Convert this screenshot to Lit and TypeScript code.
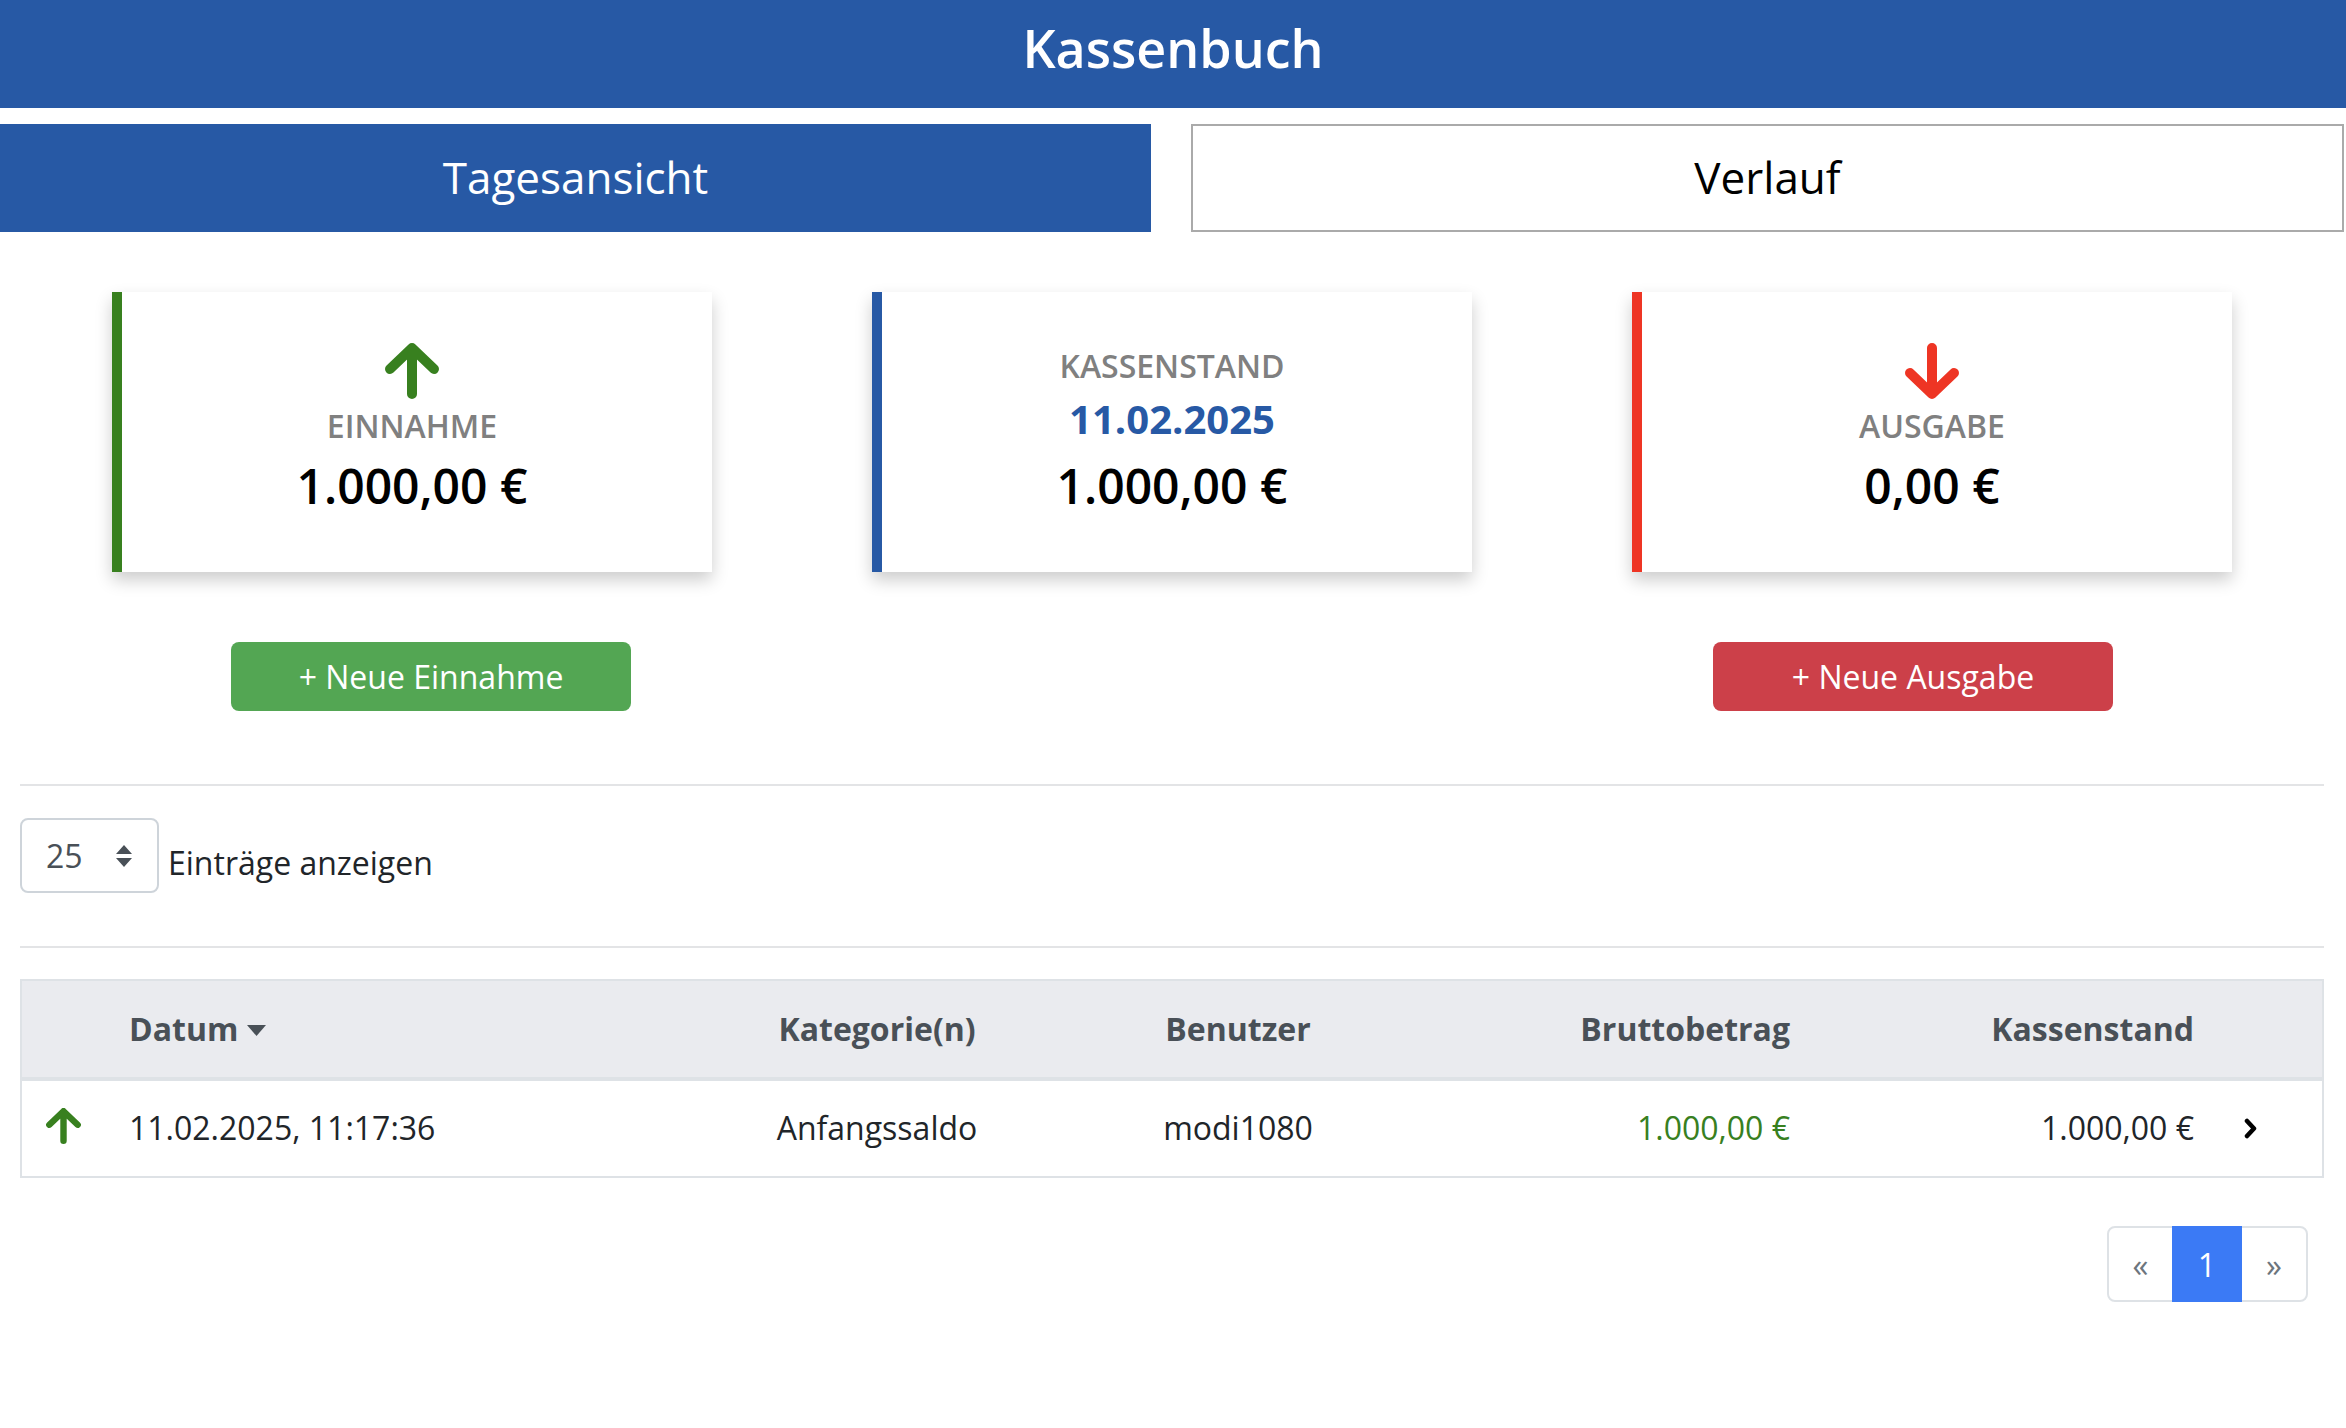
import { LitElement, html, css, svg } from "lit";
import { customElement } from "lit/decorators.js";

const upArrow = (cls: string) => html`<svg class=${cls} viewBox="0 0 54 56" aria-hidden="true"><g fill="none" stroke="currentColor" stroke-width="10" stroke-linecap="round" stroke-linejoin="round">${svg`<path d="M5 26 27 5l22 21M27 6v45"/>`}</g></svg>`;
const downArrow = (cls: string) => html`<svg class=${cls} viewBox="0 0 54 56" aria-hidden="true"><g fill="none" stroke="currentColor" stroke-width="10" stroke-linecap="round" stroke-linejoin="round">${svg`<path d="M5 30 27 51l22-21M27 50V5"/>`}</g></svg>`;

@customElement("app-root")
export class AppRoot extends LitElement {
  static styles = css`
    :host {
      display: block;
      width: 2346px;
      height: 1428px;
      background: #fff;
      overflow: hidden;
      font-family: "Open Sans", "Noto Sans", sans-serif;
      color: #212529;
      font-size: 32px;
    }
    * { box-sizing: border-box; }
    .title {
      height: 108px;
      background: #2759a5;
      color: #fff;
      font-size: 52px;
      font-weight: 600;
      display: flex;
      align-items: center;
      justify-content: center;
      padding-bottom: 13px;
    }
    .tabs {
      margin-top: 16px;
      display: grid;
      grid-template-columns: 1151px 1153px;
      column-gap: 40px;
      height: 108px;
    }
    .tab {
      display: flex;
      align-items: center;
      justify-content: center;
      font-size: 44px;
      color: #000;
      padding-bottom: 2px;
    }
    .tab.active { background: #2759a5; color: #fff; }
    .tab.idle { border: 2px solid #aaaaaa; }
    .cards {
      margin-top: 60px;
      padding: 0 32px;
      display: grid;
      grid-template-columns: repeat(3, 760px);
    }
    .card {
      justify-self: center;
      width: 600px;
      height: 280px;
      background: #fff;
      border-left: 10px solid;
      box-shadow: 0 8px 16px rgba(0, 0, 0, 0.2);
      display: flex;
      flex-direction: column;
      align-items: center;
      justify-content: flex-end;
      padding: 0 10px 53px 0;
    }
    .card.in { border-color: #38801f; }
    .card.bal { border-color: #2759a5; }
    .card.out { border-color: #ee3524; }
    .card-icon { width: 54px; height: 56px; margin-bottom: 5px; }
    .in .card-icon { color: #38801f; }
    .out .card-icon { color: #ee3524; }
    .label { font-size: 32px; font-weight: 600; color: #808080; line-height: 44px; }
    .date { font-size: 40px; font-weight: 700; color: #2759a5; line-height: 56px; margin: 3px 0 1px; }
    .amount { font-size: 48px; font-weight: 600; color: #000; line-height: 66px; margin-top: 5px; }
    .actions {
      margin-top: 70px;
      display: grid;
      grid-template-columns: 400px 400px;
      justify-content: space-between;
      padding: 0 233px 0 231px;
    }
    .btn {
      height: 69px;
      border-radius: 8px;
      color: #fff;
      display: flex;
      align-items: center;
      justify-content: center;
      font-size: 32px;
    }
    .btn.add { background: #53a653; }
    .btn.sub { background: #cc4049; }
    .section { margin: 0 22px 0 20px; }
    .rule { height: 2px; background: #e3e4e6; }
    .r1 { margin-top: 73px; }
    .length { display: flex; align-items: flex-start; gap: 9px; height: 160px; padding-top: 32px; }
    .select {
      width: 139px;
      height: 75px;
      border: 2px solid #ced4da;
      border-radius: 8px;
      display: flex;
      align-items: center;
      justify-content: space-between;
      padding: 0 24px;
      color: #495057;
      font-size: 32px;
    }
    .stepper { width: 18px; height: 22px; }
    .length-label { line-height: 56px; margin-top: 17px; }
    .table { margin-top: 31px; border: 2px solid #dee2e6; }
    .row {
      display: grid;
      grid-template-columns: 107px 571px 354px 368px 368px 404px 130px;
      align-items: center;
    }
    .body > span { margin-top: -2px; }
    .head > span { margin-top: -1px; }
    .head {
      height: 100px;
      background: #eaebef;
      border-bottom: 4px solid #dee2e6;
      font-weight: 700;
      color: #495057;
    }
    .body { height: 95px; }
    .center { text-align: center; }
    .right { text-align: right; }
    .datum { display: flex; align-items: center; gap: 9px; }
    .caret { width: 19px; height: 11px; margin-top: 3px; }
    .row-icon { width: 35px; height: 36px; color: #38801f; justify-self: start; margin-left: 24px; margin-top: -6px; }
    .pos { color: #38801f; }
    .chev { width: 14px; height: 21px; justify-self: start; margin-left: 50px; margin-top: -1px; }
    .pager-wrap { display: flex; justify-content: flex-end; margin-top: 48px; padding-right: 16px; }
    .pager {
      display: flex;
      height: 76px;
      border: 2px solid #dee2e6;
      border-radius: 8px;
      align-items: stretch;
    }
    .pg { display: flex; align-items: center; justify-content: center; color: #6c757d; font-size: 32px; width: 63px; }
    .pg.last { width: 64px; }
    .pg.on { background: #3b7af5; color: #fff; width: 70px; margin: -2px 0; }
  `;

  render() {
    return html`
      <div class="title">Kassenbuch</div>
      <div class="tabs">
        <div class="tab active">Tagesansicht</div>
        <div class="tab idle">Verlauf</div>
      </div>
      <div class="cards">
        <div class="card in">
          ${upArrow("card-icon")}
          <div class="label">EINNAHME</div>
          <div class="amount">1.000,00 €</div>
        </div>
        <div class="card bal">
          <div class="label">KASSENSTAND</div>
          <div class="date">11.02.2025</div>
          <div class="amount">1.000,00 €</div>
        </div>
        <div class="card out">
          ${downArrow("card-icon")}
          <div class="label">AUSGABE</div>
          <div class="amount">0,00 €</div>
        </div>
      </div>
      <div class="actions">
        <div class="btn add">+ Neue Einnahme</div>
        <div class="btn sub">+ Neue Ausgabe</div>
      </div>
      <div class="section">
        <div class="rule r1"></div>
        <div class="length">
          <div class="select">
            <span>25</span>
            <svg class="stepper" viewBox="0 0 18 22" aria-hidden="true"><path fill="#495057" d="M9 0l8 9H1zM9 22l-8-9h16z"/></svg>
          </div>
          <span class="length-label">Einträge anzeigen</span>
        </div>
        <div class="rule"></div>
        <div class="table">
          <div class="row head">
            <span></span>
            <span class="datum">Datum <svg class="caret" viewBox="0 0 19 11" aria-hidden="true"><path fill="#495057" d="M0 0h19l-9.500 11z"/></svg></span>
            <span class="center">Kategorie(n)</span>
            <span class="center">Benutzer</span>
            <span class="right">Bruttobetrag</span>
            <span class="right">Kassenstand</span>
            <span></span>
          </div>
          <div class="row body">
            ${upArrow("row-icon")}
            <span>11.02.2025, 11:17:36</span>
            <span class="center">Anfangssaldo</span>
            <span class="center">modi1080</span>
            <span class="right pos">1.000,00 €</span>
            <span class="right">1.000,00 €</span>
            <svg class="chev" viewBox="0 0 14 21" aria-hidden="true"><path fill="none" stroke="#000" stroke-width="4.500" stroke-linecap="round" stroke-linejoin="round" d="M3 3l7 7.500L3 18"/></svg>
          </div>
        </div>
        <div class="pager-wrap">
          <div class="pager">
            <span class="pg">«</span>
            <span class="pg on">1</span>
            <span class="pg last">»</span>
          </div>
        </div>
      </div>
    `;
  }
}
